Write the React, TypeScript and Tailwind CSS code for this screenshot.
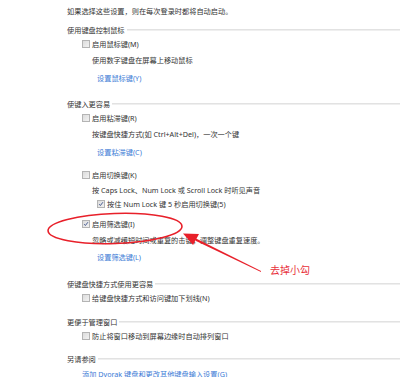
import React from "react";

const font = { fontFamily: '"Noto Sans", "Noto Sans CJK SC", sans-serif' };

const Box = ({ checked = false }: { checked?: boolean }) => (
  <span className="relative inline-block w-[8px] h-[8px] border border-[#b4b4b4] bg-gradient-to-br from-[#dcdcdc] to-[#f2f2f2] shrink-0">
    {checked && (
      <svg viewBox="0 0 8 8" className="absolute inset-0 w-full h-full">
        <path d="M1.5 4.2 L3.2 6 L6.6 1.6" fill="none" stroke="#3a4f8a" strokeWidth="1.2" />
      </svg>
    )}
  </span>
);

const Header = ({ text, mt }: { text: string; mt: string }) => (
  <div className={`flex items-center h-[14px] pr-[10px] ${mt}`}>
    <span className="text-[#333] whitespace-nowrap">{text}</span>
    <span className="flex-1 ml-[2px] h-[2px] bg-[#efefef] border-t border-[#e2e2e2]" />
  </div>
);

const Check = ({ text, checked, mt, indent = "pl-[15px]" }: { text: string; checked?: boolean; mt: string; indent?: string }) => (
  <div className={`flex items-center gap-[2px] h-[14px] ${indent} ${mt}`}>
    <Box checked={checked} />
    <span className="text-[#333] whitespace-nowrap">{text}</span>
  </div>
);

const Line = ({ text, mt }: { text: string; mt: string }) => (
  <div className={`flex items-center h-[14px] pl-[25px] text-[#333] whitespace-nowrap ${mt}`}>{text}</div>
);

const Link = ({ text, mt, indent = "pl-[30px]" }: { text: string; mt: string; indent?: string }) => (
  <div className={`flex items-center h-[14px] ${indent} text-[#3c7bd6] whitespace-nowrap ${mt}`}>{text}</div>
);

export default function App() {
  return (
    <div className="relative w-[410px] h-[377px] overflow-hidden bg-white text-[7.2px]" style={font}>
      <div className="pl-[67px] pt-[4px]">
        <div className="flex items-center h-[14px] text-[#333] whitespace-nowrap">如果选择这些设置，则在每次登录时都将自动启动。</div>

        <Header text="使用键盘控制鼠标" mt="mt-[5px]" />
        <Check text="启用鼠标键(M)" mt="mt-0" />
        <Line text="使用数字键盘在屏幕上移动鼠标" mt="mt-[2px]" />
        <Link text="设置鼠标键(Y)" mt="mt-[4px]" />

        <Header text="使键入更容易" mt="mt-[12px]" />
        <Check text="启用粘滞键(R)" mt="mt-0" />
        <Line text="按键盘快捷方式(如 Ctrl+Alt+Del)，一次一个键" mt="mt-[2px]" />
        <Link text="设置粘滞键(C)" mt="mt-[4px]" />
        <Check text="启用切换键(K)" mt="mt-[9px]" />
        <Line text="按 Caps Lock、Num Lock 或 Scroll Lock 时听见声音" mt="mt-[1px]" />
        <Check text="按住 Num Lock 键 5 秒启用切换键(5)" checked mt="mt-0" indent="pl-[30px]" />
        <Check text="启用筛选键(I)" checked mt="mt-[6px]" />
        <Line text="忽略或减缓短时间或重复的击键，调整键盘重复速度。" mt="mt-[2px]" />
        <Link text="设置筛选键(L)" mt="mt-[3px]" />

        <Header text="使键盘快捷方式使用更容易" mt="mt-[13px]" />
        <Check text="给键盘快捷方式和访问键加下划线(N)" mt="mt-0" />

        <Header text="更便于管理窗口" mt="mt-[10px]" />
        <Check text="防止将窗口移动到屏幕边缘时自动排列窗口" mt="mt-0" />

        <Header text="另请参阅" mt="mt-[9px]" />
        <Link text="添加 Dvorak 键盘和更改其他键盘输入设置(G)" mt="mt-[1px]" indent="pl-[15px]" />
      </div>

      <svg className="absolute inset-0 pointer-events-none" width="410" height="377" viewBox="0 0 410 377">
        <ellipse cx="115" cy="228.5" rx="67" ry="15" transform="rotate(-2 115 228.5)" fill="none" stroke="#e8202a" strokeWidth="1.6" />
        <polygon points="183,233.5 199,234 193,245" fill="#e8202a" />
        <polygon points="194,237.5 196,241 261,272 261,271" fill="#e8202a" />
      </svg>
      <div className="absolute left-[270px] top-[263px] text-[10px] leading-[14px] text-[#e8303a] whitespace-nowrap">去掉小勾</div>
    </div>
  );
}
